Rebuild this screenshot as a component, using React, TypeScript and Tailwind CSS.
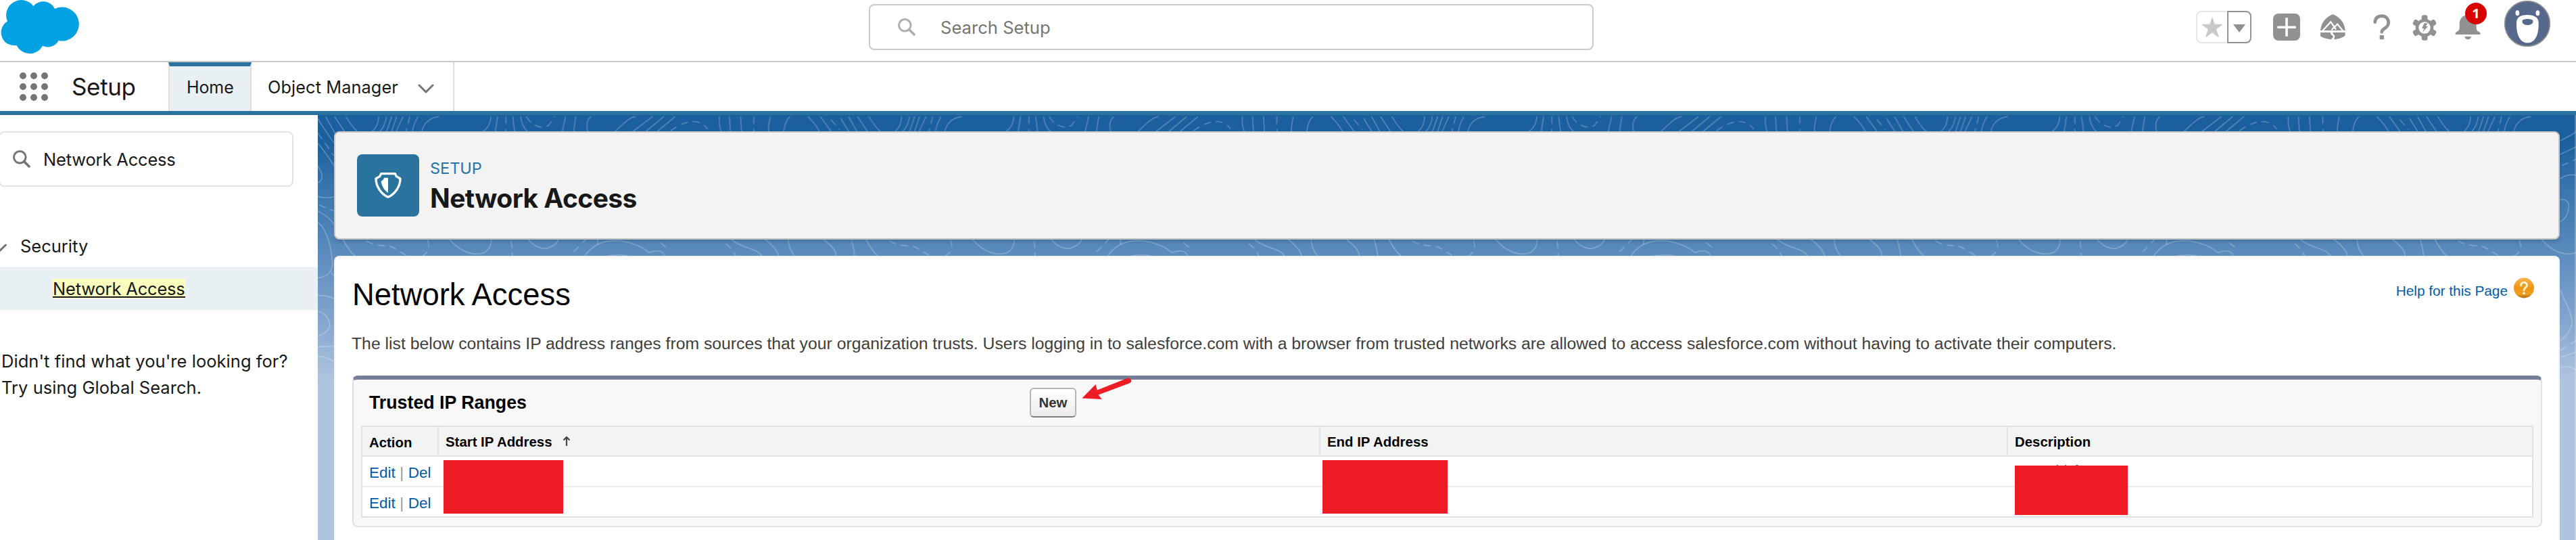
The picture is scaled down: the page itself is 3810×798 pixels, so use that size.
import React from "react";

const SOLID_LINES = [
  "M35 22L72 88L118 165", "M75 22L118 87", "M125 22C145 55 155 70 175 87", "M0 30C25 75 50 105 72 140", "M0 140C30 175 50 205 72 240",
  "M0 240C22 275 28 305 0 315", "M0 375C30 385 50 382 72 378", "M0 440C40 460 60 480 72 500",
  "M0 490C40 520 62 600 65 680C60 720 30 735 0 737", "M60 715L75 728", "M0 815C40 815 60 822 72 830",
  "M0 885C30 890 50 915 53 945C50 975 20 990 0 995", "M0 1043L72 1040", "M0 1085C30 1085 50 1095 72 1108",
  "M270 22C268 60 255 75 242 87", "M305 22C300 50 290 75 275 87", "M328 22L306 87", "M350 22L328 87", "M378 22L348 87",
  "M445 22C430 45 425 60 420 87", "M537 22C500 25 470 50 462 87", "M768 22C765 60 750 75 735 87", "M798 22L788 87",
  "M865 22L873 87", "M900 22C905 60 915 75 930 87", "M1100 22L1085 87", "M1145 22L1135 87",
  "M1212 22C1190 40 1192 70 1198 87", "M1410 22C1380 25 1350 60 1320 87", "M1485 22L1400 87", "M1535 22L1457 87",
  "M1585 22L1507 87", "M1782 22C1780 60 1785 75 1790 87", "M1827 22L1831 87", "M1876 22L1880 87",
  "M2008 22C2002 50 1998 70 2000 87", "M2095 22C2075 40 2070 70 2068 87", "M2175 22C2200 45 2220 75 2225 87",
  "M2230 22L2277 87",
  "M112 567C130 600 145 625 165 639", "M585 567C640 630 700 640 740 625C765 610 770 590 770 567",
  "M935 567C960 600 1000 612 1020 605C1050 595 1065 580 1068 567",
  "M1185 639C1230 575 1290 570 1340 573C1400 580 1440 600 1470 625C1500 615 1530 612 1538 639", "M1242 567V590",
  "M1288 639C1320 635 1350 632 1375 639", "M1835 567C1890 610 1940 600 1970 639", "M1985 567C2020 590 2040 620 2045 639",
  "M2087 567C2088 600 2100 620 2115 639", "M2245 567C2280 595 2300 615 2300 639",
  "M668 130L740 90", "M668 190L740 155", "M668 298C690 280 720 278 740 282",
  "M668 390C700 385 710 410 705 430C700 465 680 482 668 488", "M668 790C690 850 720 890 720 930C720 970 690 1000 668 1015",
  "M668 1090L740 1065", "M668 1135C700 1125 720 1135 740 1145",
];

const DASHED_LINES = [
  "M0 95L72 195", "M5 413L72 440", "M408 22L392 87", "M835 22V87", "M925 22C950 65 1000 80 1025 60L1052 22",
  "M1565 85C1620 45 1690 20 1730 77", "M1935 22V87", "M2277 35L2315 80",
  "M215 573C260 600 300 590 330 600L392 637", "M487 570C495 590 500 620 465 639", "M858 572C862 600 862 620 862 639",
  "M1195 560L1130 627", "M1520 580L1555 610", "M1810 585L1835 607L1855 639", "M675 240L740 210", "M668 1058L740 1015",
];

function Topography() {
  return (
    <svg className="absolute inset-0 h-full w-full" aria-hidden="true">
      <defs>
        <pattern id="topo" width="773.5" height="700" patternUnits="userSpaceOnUse">
          <g transform="translate(0 -5) scale(0.33333)" fill="none" stroke="#ffffff" strokeOpacity="0.24" strokeWidth="5">
            {SOLID_LINES.map((d) => <path key={d} d={d} />)}
            {DASHED_LINES.map((d) => <path key={d} d={d} strokeDasharray="32 22" />)}
          </g>
        </pattern>
      </defs>
      <rect width="100%" height="100%" fill="url(#topo)" />
    </svg>
  );
}

function Cloud() {
  return (
    <svg className="block h-[82px] w-[118px]" viewBox="0 0 118 82">
      <path fill="#00a1e3" d="M49.5 9A22.450 22.450 0 0 0 11 31.5A19.300 19.300 0 0 0 24.5 67A21.5 21.5 0 0 0 63 67.7A18 18 0 0 0 86.6 60A25 25 0 1 0 81 13A18.8 18.8 0 0 0 49.5 9Z" />
    </svg>
  );
}

function Magnifier({ className }: { className: string }) {
  return (
    <svg className={className} viewBox="0 0 26 26" fill="none" stroke="currentColor">
      <circle cx="10.3" cy="10.3" r="8.8" strokeWidth="3" />
      <path d="M16.5 16.5L24 24" strokeWidth="3.6" strokeLinecap="round" />
    </svg>
  );
}

function HeaderActions() {
  return (
    <>
      <div className="mt-4 ml-[891px] flex h-12 w-[82px]">
        <div className="flex w-[46px] items-center justify-center rounded-l-lg border-2 border-r-0 border-[#e5e5e5]">
          <svg className="h-[30px] w-[30px]" viewBox="81 75 90 90" fill="#c9c9c9">
            <path d="M126 75L137 107H169C171 107 171 110 169 111L144 130L155 162C155 165 153 165 151 164L126 145L100 164C98 165 96 164 97 162L107 130L82 111C80 110 81 107 83 107H115Z" />
          </svg>
        </div>
        <div className="flex w-9 items-center justify-center rounded-r-lg border-2 border-[#919191]">
          <svg className="mt-1 h-3 w-[18px]" viewBox="0 0 18 12" fill="#919191"><path d="M0 0H18L9 12Z" /></svg>
        </div>
      </div>
      <svg className="mt-5 ml-8 h-10 w-10" viewBox="0 0 40 40">
        <rect width="40" height="40" rx="8" fill="#919191" />
        <path d="M6.3 20.3H33.7M20 6.3V33.7" stroke="#fff" strokeWidth="3.6" />
      </svg>
      <svg className="mt-5 ml-[29px] h-10 w-[38px]" viewBox="603 60 114 120" fill="#919191">
        <path d="M661 63C690 75 714 100 716 135H606C608 100 632 75 661 63Z" />
        <path d="M614 138L652 97L675 131M655 133L681 107L707 138" fill="none" stroke="#fff" strokeWidth="6.5" />
        <path d="M606 144H651C650 155 662 158 663 162C662 168 655 170 654 175C635 173 615 168 606 160Z" />
        <path d="M661 144H716V157C705 168 685 173 668 175C666 168 674 160 666 154C661 151 661 148 661 144Z" />
      </svg>
      <svg className="mt-5 ml-[41px] h-10 w-[26px]" viewBox="838 60 78 120">
        <path d="M846 98C848 80 860 71 877 71C895 71 906 84 906 100C906 114 899 120 889 126C880 132 876 138 876 142" fill="none" stroke="#919191" strokeWidth="14" strokeLinecap="round" />
        <rect x="867" y="156" width="19" height="19" rx="4" fill="#919191" />
      </svg>
      <svg className="mt-5 ml-8 h-10 w-9" viewBox="1014 60 108 120" fill="#919191">
        <circle cx="1068" cy="123" r="40" />
        {[0, 60, 120].map((a) => (
          <rect key={a} x="1055" y="67" width="26" height="112" rx="9" transform={`rotate(${a} 1068 123)`} />
        ))}
        <circle cx="1068" cy="123" r="26" fill="#fff" />
        <path d="M1067 103H1081L1074 117H1083L1059 143L1066 126H1056Z" />
      </svg>
      <div className="relative mt-5 ml-[26px] h-10 w-10">
        <svg className="h-10 w-10" viewBox="1200 60 120 120" fill="#919191">
          <path d="M1205 153C1203 147 1208 143 1215 139C1222 135 1223 130 1223 120V105C1223 82 1240 66 1260 66C1280 66 1298 82 1298 105V120C1298 130 1299 135 1306 139C1313 143 1318 147 1315 153Z" />
          <path d="M1246 162H1275C1273 171 1267 175 1260 175S1248 171 1246 162Z" />
        </svg>
        <span className="absolute -top-4 left-4 flex h-8 w-8 items-center justify-center rounded-full bg-[#d90000] font-['Open_Sans',sans-serif] text-[20px] leading-none font-bold text-white">1</span>
      </div>
      <svg className="mt-[1px] ml-[34px] h-[68px] w-[68px]" viewBox="0 0 204 204">
        <circle cx="102" cy="102" r="100" fill="#56698c" stroke="#8e8e8e" strokeWidth="5" />
        <ellipse cx="58" cy="55" rx="8.5" ry="12" fill="#fff" />
        <ellipse cx="148" cy="55" rx="8.5" ry="12" fill="#fff" />
        <path fill="#fff" d="M70 70C85 61 119 61 134 70C148 75 153 87 152 108C152 145 140 187 103 187C67 187 54 145 54 108C53 87 58 75 70 70Z" />
        <path fill="#56698c" d="M80 89C82 78 124 78 127 89C130 101 116 108 103 108C91 108 77 101 80 89Z" />
      </svg>
    </>
  );
}

function ActionLinks() {
  return (
    <div className="w-[113px] shrink-0 pt-[3px] pl-[10px] text-[22.5px] leading-[42px] text-[#015ba7]">
      <span>Edit</span>
      <span className="px-[6.5px] text-[#999]">|</span>
      <span>Del</span>
    </div>
  );
}

function IpTable() {
  return (
    <div className="relative mx-[11px] mt-[68px] h-[136px] border-2 border-[#dfe2e6] bg-white">
      <div className="flex h-11 border-b-2 border-[#dfe2e6] bg-[#f2f4f3] text-[20.4px] leading-[42px] font-bold text-black">
        <div className="w-[113px] border-r-2 border-[#dfe2e6] pt-[2px] pl-[10px]">Action</div>
        <div className="flex w-[1304px] items-start border-r-2 border-[#dfe2e6] pt-[1px] pl-[10px]">
          Start IP Address
          <svg className="mt-[12px] ml-[15px] h-4 w-3" viewBox="0 0 12 16" fill="none" stroke="#444" strokeWidth="2.2">
            <path d="M6 15V2M1.5 6.5L6 2L10.500 6.5" />
          </svg>
        </div>
        <div className="w-[1017px] border-r-2 border-[#dfe2e6] pt-[1px] pl-[10px]">End IP Address</div>
        <div className="pt-[1px] pl-[10px]">Description</div>
      </div>
      <div className="flex h-[45px] border-b-2 border-[#ececec]"><ActionLinks /></div>
      <div className="flex h-[43px]"><ActionLinks /></div>
      <div className="absolute top-[49px] left-[120px] h-[79px] w-[177px] bg-[#ee1c25]" />
      <div className="absolute top-[49px] left-[1420px] h-[79px] w-[185px] bg-[#ee1c25]" />
      <div className="absolute top-[56px] left-[2506px] h-[1px] w-[2px] bg-[#777]" />
      <div className="absolute top-[56px] left-[2518px] h-[1px] w-[2px] bg-[#777]" />
      <div className="absolute top-[56px] left-[2534px] h-[1px] w-[4px] bg-[#777]" />
      <div className="absolute top-[57px] left-[2444px] h-[73px] w-[167px] bg-[#ee1c25]" />
    </div>
  );
}

export default function App() {
  return (
    <div className="flex h-[798px] w-[3810px] flex-col overflow-hidden bg-white font-['Inter',sans-serif] text-[#181818]">
      <header className="flex h-[92px] shrink-0 items-start border-b-2 border-[#c9c9c9]">
        <Cloud />
        <div className="mt-[6px] ml-[1167px] flex h-[68px] w-[1072px] items-center rounded-lg border-2 border-[#c9c9c9] text-[#747474]">
          <Magnifier className="ml-[41px] h-[26px] w-[26px] text-[#aeaeae]" />
          <span className="ml-[37px] pt-[2px] text-[25.600px] leading-[62px]">Search Setup</span>
        </div>
        <HeaderActions />
      </header>

      <nav className="flex h-[78px] shrink-0 border-b-[6px] border-[#2a739e] bg-white">
        <div className="mt-[15px] ml-[29px] grid h-[42px] w-[42px] grid-cols-3 gap-[6px]">
          {Array.from({ length: 9 }, (_, i) => <span key={i} className="h-[10px] w-[10px] rounded-full bg-[#747474]" />)}
        </div>
        <span className="ml-[35px] w-[143px] text-[35px] leading-[73px] tracking-[-0.35px]">Setup</span>
        <div className="w-[123px] border-x-2 border-t-[6px] border-x-[#dddddd] border-t-[#2a739e] bg-[#e8f0f3] pl-[25px] text-[25px] leading-[62px] tracking-[-0.1px]">Home</div>
        <div className="flex w-[300px] items-center border-r-2 border-[#dddddd] pl-[24px] text-[25.300px] leading-[72px] tracking-[0.1px]">
          <span className="w-[222px] pt-[1px]">Object Manager</span>
          <svg className="mt-[6px] h-[14px] w-6" viewBox="0 0 24 14" fill="none" stroke="#747474" strokeWidth="3" strokeLinecap="round" strokeLinejoin="round">
            <path d="M2 2L12 12L22 2" />
          </svg>
        </div>
      </nav>

      <div className="flex min-h-0 flex-1">
        <aside className="w-[470px] shrink-0 text-[25.500px]">
          <div className="mt-[24px] -ml-[2px] flex h-[82px] w-[436px] items-center rounded-lg border-2 border-[#e2e2e2]">
            <Magnifier className="ml-[19px] h-[26px] w-[26px] text-[#747474]" />
            <span className="ml-[19px] pt-[2px] leading-[76px] tracking-[-0.18px]">Network Access</span>
          </div>
          <div className="mt-[66px] flex h-[53px] items-start">
            <svg className="mt-[18px] h-[14px] w-[10px]" viewBox="0 0 10 14" fill="none" stroke="#747474" strokeWidth="3" strokeLinecap="round"><path d="M-2 12L8.500 2" /></svg>
            <span className="ml-5 leading-[44px]">Security</span>
          </div>
          <div className="flex h-[63px] items-center bg-[#e8f0f3] pl-[78px]">
            <span className="h-[29px] border-b-[2px] border-[#faffbd] bg-[#faffbd] leading-[30px] tracking-[-0.18px]"><span className="block h-[28px] border-b-2 border-[#181818]">Network Access</span></span>
          </div>
          <p className="mt-[56px] pl-[2px] leading-[39px] tracking-[0.04px]">Didn't find what you're looking for?<br />Try using Global Search.</p>
        </aside>

        <main className="relative flex flex-1 flex-col overflow-hidden bg-[linear-gradient(to_bottom,#1b5f9e_0px,#1b5f9e_40px,#3b76ae_110px,#4b82b6_165px,#608ebf_215px,#81a4cd_300px,#b0c4df_392px)] px-6 pt-6">
          <Topography />
          <div className="absolute inset-y-0 right-0 w-[2px] bg-white/25" />
          <section className="relative flex h-[160px] shrink-0 rounded-lg border-2 border-[#c9c7c6] bg-[#f3f3f3] pt-8 pl-8 shadow-[0_4px_4px_rgba(0,0,0,0.12)]">
            <div className="flex h-[92px] w-[92px] items-center justify-center rounded-lg bg-[#2a739e]">
              <svg className="h-10 w-10" viewBox="0 0 120 120">
                <path d="M29 8H91L97 20L114 30C114 62 93 97 60 112C27 97 6 62 6 30L23 20Z" fill="none" stroke="#fff" strokeWidth="10" strokeLinejoin="round" />
                <path d="M60 26H42C40 34 35 38 29 42C32 65 44 82 60 93Z" fill="#fff" />
              </svg>
            </div>
            <div className="ml-[16px] pt-[4px]">
              <div className="text-[23.500px] leading-[34px] text-[#2574a9]">SETUP</div>
              <h1 className="pt-[3px] text-[39px] leading-[48px] font-bold tracking-[-0.58px]">Network Access</h1>
            </div>
          </section>

          <section className="relative mt-6 flex-1 rounded-t-lg border-2 border-b-0 border-[#f3f3f3] bg-white font-['Liberation_Sans',Arial,sans-serif]">
            <div className="flex h-[97px] items-start justify-between pr-[36px] pl-[25px]">
              <h2 className="mt-[24px] text-[45.400px] leading-[64px] text-black">Network Access</h2>
              <div className="flex items-start pt-[30px] text-[20.800px] leading-[40px] text-[#015ba7]">
                <span>Help for this Page</span>
                <svg className="ml-[9px] h-[31px] w-[30px]" viewBox="0 0 30 31">
                  <defs>
                    <linearGradient id="orb" x1="0" y1="0" x2="0" y2="1">
                      <stop offset="0" stopColor="#f7b64c" /><stop offset="0.5" stopColor="#ee9412" /><stop offset="0.8" stopColor="#efa021" /><stop offset="1" stopColor="#a8680c" />
                    </linearGradient>
                  </defs>
                  <circle cx="15" cy="15.5" r="15" fill="url(#orb)" />
                  <path d="M10.500 12C10.500 5.800 19.500 5.800 19.500 11.500C19.500 15 15 15 15 19" fill="none" stroke="#fff3dc" strokeWidth="2.800" strokeLinecap="round" />
                  <circle cx="15" cy="23.300" r="1.900" fill="#fff3dc" />
                </svg>
              </div>
            </div>
            <p className="mt-2 pl-[24px] text-[24.760px] leading-[46px] whitespace-nowrap text-[#3e3e3c]">
              The list below contains IP address ranges from sources that your organization trusts. Users logging in to salesforce.com with a browser from trusted networks are allowed to access salesforce.com without having to activate their computers.
            </p>
            <div className="relative mt-6 mr-[24px] ml-[25px] h-[224px] rounded-lg border-2 border-t-[6px] border-[#dfe2e6] border-t-[#747e98] bg-[#f8f8f8]">
              <div className="absolute top-[12px] left-0 flex h-[44px] items-center">
                <h3 className="w-[1000px] pl-[23px] text-[26.750px] leading-[40px] font-bold text-black">Trusted IP Ranges</h3>
                <button className="h-[44px] w-[69px] rounded-md border-2 border-[#b5b5b5] border-b-[#7f7f7f] bg-linear-to-b from-white to-[#ececec] text-[20.400px] leading-[40px] font-bold text-[#333]">New</button>
                <svg className="absolute -top-[18px] left-[1077px] h-[36px] w-[76px]" viewBox="0 0 76 36">
                  <path fill="#ee1c25" d="M0.400 33.500L20.500 13L22.800 21.500L67 4Q72 3 73 7Q73.500 10 70 11.500L24.500 28.500L29.700 35Z" />
                </svg>
              </div>
              <IpTable />
            </div>
          </section>
        </main>
      </div>
    </div>
  );
}
